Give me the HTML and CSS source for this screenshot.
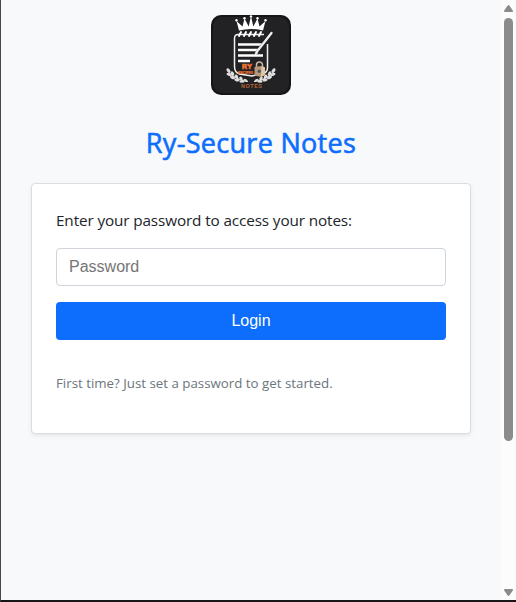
FILE: index.html
```html
<!DOCTYPE html>
<html lang="en">
<head>
<meta charset="utf-8">
<title>Ry-Secure Notes</title>
<link rel="stylesheet" href="styles.css">
</head>
<body>
<div class="window">
  <main class="page">
    <svg class="logo" viewBox="0 0 80 80" role="img" aria-label="Ry-Secure Notes logo">
      <defs>
        <g id="laurel" fill="#dededc">
          <path d="M16 55q7 10 21 11.500" fill="none" stroke="#dededc" stroke-width="1.200"/>
          <ellipse cx="17.500" cy="55.500" rx="2.600" ry="1.500" transform="rotate(50 17.500 55.500)"/>
          <ellipse cx="18" cy="59.500" rx="2.600" ry="1.500" transform="rotate(25 18 59.500)"/>
          <ellipse cx="21.500" cy="58.500" rx="2.400" ry="1.500" transform="rotate(60 21.500 58.500)"/>
          <ellipse cx="21.500" cy="62.500" rx="2.600" ry="1.500" transform="rotate(20 21.500 62.500)"/>
          <ellipse cx="25.500" cy="61.500" rx="2.200" ry="1.500" transform="rotate(55 25.500 61.500)"/>
          <ellipse cx="26" cy="65" rx="2.600" ry="1.500" transform="rotate(10 26 65)"/>
          <ellipse cx="30" cy="63.500" rx="2.100" ry="1.400" transform="rotate(45 30 63.500)"/>
          <ellipse cx="31" cy="66.500" rx="2.600" ry="1.300"/>
          <ellipse cx="34.500" cy="65.300" rx="2.200" ry="1.200" transform="rotate(30 34.500 65.300)"/>
        </g>
      </defs>
      <rect width="80" height="80" rx="10" fill="#161617"/>
      <rect x="2" y="2" width="76" height="76" rx="9" fill="#222224"/>
      <g fill="#fff">
        <path d="M28 15.500 25.500 6l6 5.500L33.500 3.500l4.200 8L40 1l2.300 10.500 4.200-8 2 8 6-5.500L52 15.500Q40 12.500 28 15.500Z"/>
        <circle cx="25.500" cy="5.200" r="1.200"/><circle cx="33.500" cy="3.200" r="1.200"/><circle cx="40" cy="1.400" r="1.200"/><circle cx="46.500" cy="3.200" r="1.200"/><circle cx="54.500" cy="5.200" r="1.200"/>
      </g>
      <path d="M53 19.500H27q-3.500 0-3.500 4v28q0 6 5 7.500L41 61l11-2.500q4.500-1 4.500-6V29" fill="none" stroke="#f1f1f1" stroke-width="1.500"/>
      <path d="m28 21 2-4m3 4 2-4m3 4 2-4m3 4 2-4m3 4 2-4" stroke="#fff" stroke-width="1.900" stroke-linecap="round"/>
      <path d="M27 29.500h26M27 35h21M27 40.500h25M27 46h12" stroke="#fff" stroke-width="2.300"/>
      <path d="M61.500 17.500 46 38" stroke="#222224" stroke-width="4"/>
      <path d="M60.500 18 46 36.500" stroke="#eee" stroke-width="2.300" stroke-linecap="round"/>
      <path d="m44.800 36 2.600 2-4.400 3Z" fill="#eee"/>
      <use href="#laurel"/>
      <use href="#laurel" transform="matrix(-1 0 0 1 80 0)"/>
      <text class="mark" x="31" y="53.500" textLength="10">RY</text>
      <text class="submark" x="27" y="58.800" textLength="15" lengthAdjust="spacingAndGlyphs">RECIPES</text>
      <path d="M45.500 53v-3a3 3 0 0 1 6 0V53" fill="none" stroke="#c8b8a4" stroke-width="1.500"/>
      <path d="m43.500 52 7-1 3.500 1.500v7.500l-4 2-6.500-1.500Z" fill="#b6977a"/>
      <path d="m50.500 51 3.500 1.500v7.500l-4 2Z" fill="#e1c5a5"/>
      <circle cx="48.300" cy="56.300" r="1.700" fill="#485766"/>
      <text class="caption" x="30" y="73" textLength="21">NOTES</text>
    </svg>
    <h1 class="title">Ry-Secure Notes</h1>
    <form class="card">
      <label class="label" for="password">Enter your password to access your notes:</label>
      <input class="field" id="password" type="password" placeholder="Password">
      <button class="login" type="button">Login</button>
      <p class="hint">First time? Just set a password to get started.</p>
    </form>
  </main>
  <div class="scrollbar">
    <svg class="arrow" viewBox="0 0 15 16"><path d="M7.500 6 11 11H4Z"/></svg>
    <div class="thumb"></div>
    <svg class="arrow" viewBox="0 0 15 16"><path d="M7.500 11 11 6H4Z"/></svg>
  </div>
</div>
</body>
</html>
```

FILE: styles.css
```css
* { box-sizing: border-box; }
body {
  margin: 0;
  overflow: hidden;
  font-family: "Open Sans", sans-serif;
  color: #212529;
}
.window {
  display: flex;
  height: 602px;
  border-left: 1px solid #48484a;
  border-bottom: 2px solid #171518;
  background: #f8f9fb;
}
.page {
  flex: 1;
  display: flex;
  flex-direction: column;
  align-items: center;
  padding: 15px 30px;
}
.logo { width: 80px; height: 80px; flex: none; }
.mark, .submark, .caption {
  font-family: "Liberation Sans", sans-serif;
  font-weight: 700;
  fill: #ee7431;
}
.mark { font-size: 7px; stroke: #ee7431; stroke-width: .6px; }
.submark { font-size: 4px; stroke: #ee7431; stroke-width: .2px; }
.caption { font-size: 5.500px; fill: #b76538; }
.title {
  margin: 30px 0 0;
  height: 36px;
  line-height: 36px;
  font-size: 27px;
  font-weight: 400;
  letter-spacing: .3px;
  -webkit-text-stroke: .6px #0d6efd;
  white-space: nowrap;
  color: #0d6efd;
}
.card {
  display: flex;
  flex-direction: column;
  width: 100%;
  height: 251px;
  margin-top: 22px;
  padding: 24px;
  background: #fff;
  border: 1px solid #dcdddf;
  border-radius: 4px;
  box-shadow: 0 2px 4px rgba(0, 0, 0, .075);
}
.label {
  height: 24px;
  line-height: 24px;
  font-size: 15.300px;
  letter-spacing: -.125px;
  white-space: nowrap;
}
.field {
  height: 38px;
  margin: 16px 0;
  padding: 6px 12px;
  border: 1px solid #ced4da;
  border-radius: 4px;
  background: #fff;
  font: 16px/24px "Liberation Sans", sans-serif;
}
.field::placeholder { color: #757575; opacity: 1; }
.login {
  height: 38px;
  padding: 0;
  border: 0;
  border-radius: 4px;
  background: #0d6efd;
  color: #fff;
  font: 16px/24px "Liberation Sans", sans-serif;
}
.hint {
  margin: 33px 0 0;
  line-height: 21px;
  font-size: 13.300px;
  white-space: nowrap;
  color: #6c757d;
}
.scrollbar {
  display: flex;
  flex-direction: column;
  justify-content: space-between;
  width: 15px;
  background: #fcfcfc;
}
.arrow { flex: none; width: 15px; height: 16px; fill: #8b8b8b; stroke: #8b8b8b; stroke-width: 2; stroke-linejoin: round; }
.thumb {
  width: 9px;
  height: 423px;
  margin: 2px 0 auto 3px;
  border-radius: 5px;
  background: #8b8b8b;
}
```
